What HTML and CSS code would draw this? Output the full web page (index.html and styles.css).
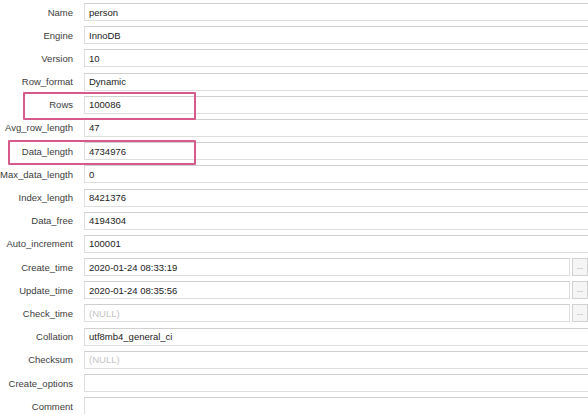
FILE: index.html
```html
<!DOCTYPE html>
<html lang="en">
<head>
    <meta charset="UTF-8">
    <title>Table Info - person</title>
    <link rel="stylesheet" href="styles.css">
</head>
<body>
<div class="info-panel">
    <div class="field"><label>Name</label><input class="value" type="text" value="person"></div>
    <div class="field"><label>Engine</label><input class="value" type="text" value="InnoDB"></div>
    <div class="field"><label>Version</label><input class="value" type="text" value="10"></div>
    <div class="field"><label>Row_format</label><input class="value" type="text" value="Dynamic"></div>
    <div class="field"><label>Rows</label><input class="value" type="text" value="100086"></div>
    <div class="field"><label>Avg_row_length</label><input class="value" type="text" value="47"></div>
    <div class="field"><label>Data_length</label><input class="value" type="text" value="4734976"></div>
    <div class="field"><label>Max_data_length</label><input class="value" type="text" value="0"></div>
    <div class="field"><label>Index_length</label><input class="value" type="text" value="8421376"></div>
    <div class="field"><label>Data_free</label><input class="value" type="text" value="4194304"></div>
    <div class="field"><label>Auto_increment</label><input class="value" type="text" value="100001"></div>
    <div class="field"><label>Create_time</label>
        <div class="with-btn"><input class="value" type="text" value="2020-01-24 08:33:19"><button class="more">...</button></div>
    </div>
    <div class="field"><label>Update_time</label>
        <div class="with-btn"><input class="value" type="text" value="2020-01-24 08:35:56"><button class="more">...</button></div>
    </div>
    <div class="field"><label>Check_time</label>
        <div class="with-btn"><input class="value" type="text" placeholder="(NULL)"><button class="more">...</button></div>
    </div>
    <div class="field"><label>Collation</label><input class="value" type="text" value="utf8mb4_general_ci"></div>
    <div class="field"><label>Checksum</label><input class="value" type="text" placeholder="(NULL)"></div>
    <div class="field"><label>Create_options</label><input class="value" type="text" value=""></div>
    <div class="field"><label>Comment</label><input class="value" type="text" value=""></div>

    <!-- highlight marks -->
    <div class="mark mark-rows"></div>
    <div class="mark mark-data"></div>
</div>
</body>
</html>
```

FILE: styles.css
```css
body {
    font-family: "Liberation Sans", Arial, sans-serif;
    margin: 0;
    padding: 0;
    background-color: #fff;
    overflow: hidden;
}

.info-panel {
    position: relative;
    width: 600px;
    padding-top: 3px;
    display: flex;
    flex-direction: column;
    gap: 5.2px;
}

.field {
    display: grid;
    grid-template-columns: 73px 1fr;
    column-gap: 11px;
    align-items: center;
    height: 18px;
}

.field label {
    text-align: right;
    font-size: 9.5px;
    color: #3c3c3c;
    white-space: nowrap;
}

.value {
    box-sizing: border-box;
    width: 100%;
    height: 18px;
    margin: 0;
    padding: 0 4px;
    border: 1px solid #dedede;
    border-top-color: #cfcfcf;
    background-color: #fff;
    font-family: "Liberation Sans", Arial, sans-serif;
    font-size: 9.5px;
    color: #222;
    outline: none;
}

.value::placeholder {
    color: #c4c4c4;
}

.with-btn {
    display: flex;
    gap: 2px;
    padding-right: 12px;
}

.with-btn .value {
    flex: 1;
}

.more {
    width: 16px;
    height: 18px;
    margin: 0;
    padding: 0;
    border: 1px solid #d2d2d2;
    background-color: #f5f5f5;
    color: #888;
    font-size: 8px;
    line-height: 14px;
}

.mark {
    position: absolute;
    box-sizing: border-box;
    border: 2px solid #d75a8c;
    border-radius: 1px;
}

.mark-rows {
    left: 23px;
    top: 92px;
    width: 173px;
    height: 28px;
}

.mark-data {
    left: 8px;
    top: 140px;
    width: 188px;
    height: 25px;
}
```
